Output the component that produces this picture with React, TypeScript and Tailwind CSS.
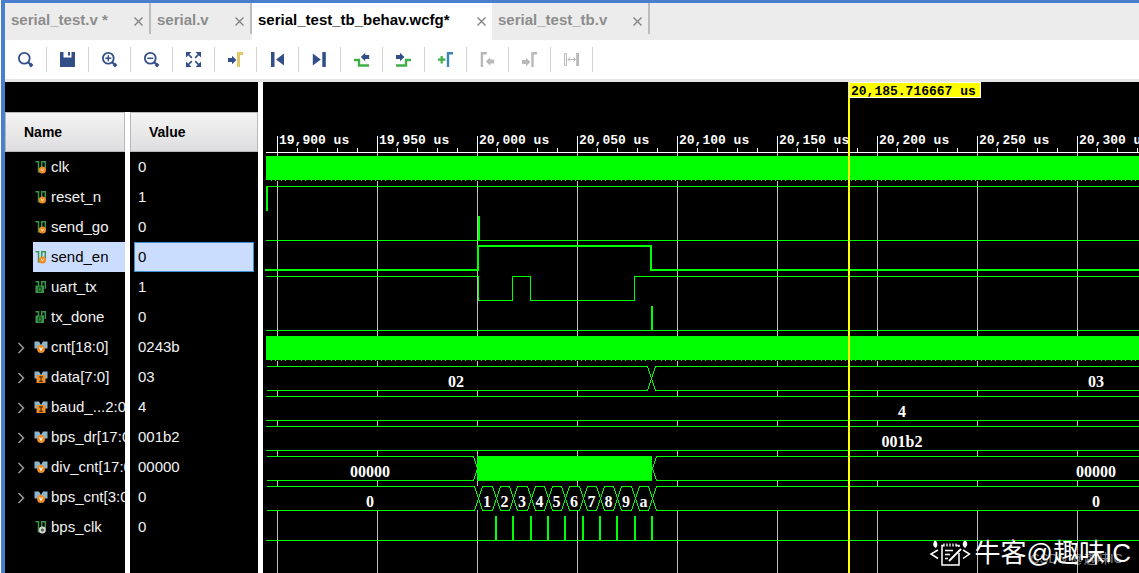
import React, { useEffect, useState } from 'react';

const NAVY = '#324f87';
const GREEN = '#3fae49';
const GRAY = '#b9b9b9';
const LIME = '#00ff00';

const tabs = [
  { label: 'serial_test.v *', width: 'w-[146px]' },
  { label: 'serial.v', width: 'w-[101px]' },
  { label: 'serial_test_tb_behav.wcfg*', width: 'w-[240px]' },
  { label: 'serial_test_tb.v', width: 'w-[158px]' },
];

const arrowRight = (y: number, fill: string) => (
  <path d={`M0 ${y - 2}h4v-2.2l4.4 4.2l-4.4 4.2v-2.2h-4z`} fill={fill} />
);
const arrowLeft = (x: number, y: number, fill: string) => (
  <path d={`M${x + 8.4} ${y - 2}h-4v-2.2l-4.4 4.2l4.4 4.2v-2.2h4z`} fill={fill} />
);
const lens = (
  <>
    <circle cx="6.3" cy="6.3" r="5.4" fill="none" stroke={NAVY} strokeWidth="1.8" />
    <path d="M10 10L12 12" stroke={NAVY} strokeWidth="2" />
    <path d="M11.8 11.8L14.2 14.2" stroke={NAVY} strokeWidth="3.4" />
  </>
);

const tools: { label: string; disabled?: boolean; icon: React.ReactNode }[] = [
  { label: 'Search', icon: lens },
  {
    label: 'Save',
    icon: <path d="M0 0h3.500v5.500h8V0H15v15H0zM8 0h2v3.600H8z" fill={NAVY} />,
  },
  {
    label: 'Zoom in',
    icon: (
      <>
        {lens}
        <path d="M3.300 6.300h6M6.300 3.300v6" stroke={NAVY} strokeWidth="1.5" />
      </>
    ),
  },
  {
    label: 'Zoom out',
    icon: (
      <>
        {lens}
        <path d="M3.300 6.300h6" stroke={NAVY} strokeWidth="1.5" />
      </>
    ),
  },
  {
    label: 'Zoom fit',
    icon: (
      <>
        <path d="M0 0h5.500L0 5.500zM15 0v5.500L9.500 0zM0 15V9.500L5.500 15zM15 15H9.500L15 9.500z" fill={NAVY} />
        <path d="M2 2l3.800 3.800M13 2L9.200 5.800M2 13l3.800-3.800M13 13L9.200 9.200" stroke={NAVY} strokeWidth="1.7" />
      </>
    ),
  },
  {
    label: 'Go to cursor',
    icon: (
      <>
        {arrowRight(8, NAVY)}
        <path d="M10.500 15V1.500H15" fill="none" stroke="#e3c766" strokeWidth="3" />
      </>
    ),
  },
  {
    label: 'Go to start',
    icon: <path d="M1 0h3.500v15H1zM14 1.500v12L6 7.500z" fill={NAVY} />,
  },
  {
    label: 'Go to end',
    icon: <path d="M10.300 0h3.500v15h-3.500zM.8 1.500v12l8-6z" fill={NAVY} />,
  },
  {
    label: 'Previous transition',
    icon: (
      <>
        <path d="M0 8h5v5.500h10" fill="none" stroke={GREEN} strokeWidth="2.4" />
        {arrowLeft(6.8, 5, NAVY)}
      </>
    ),
  },
  {
    label: 'Next transition',
    icon: (
      <>
        <path d="M0 13.500h10V8h5" fill="none" stroke={GREEN} strokeWidth="2.4" />
        {arrowRight(5, NAVY)}
      </>
    ),
  },
  {
    label: 'Add marker',
    icon: (
      <>
        <path d="M0 7.700h7.400M3.700 4v7.400" stroke={GREEN} strokeWidth="2.2" />
        <path d="M10 15V1.200h5" fill="none" stroke="#3b85b5" strokeWidth="2.4" />
      </>
    ),
  },
  {
    label: 'Previous marker',
    disabled: true,
    icon: (
      <>
        <path d="M1.900 15V1.200h5" fill="none" stroke={GRAY} strokeWidth="2.4" />
        {arrowLeft(5.8, 9.5, GRAY)}
      </>
    ),
  },
  {
    label: 'Next marker',
    disabled: true,
    icon: (
      <>
        {arrowRight(10, GRAY)}
        <path d="M10.500 15V1.200h4.500" fill="none" stroke={GRAY} strokeWidth="2.4" />
      </>
    ),
  },
  {
    label: 'Swap cursors',
    disabled: true,
    icon: (
      <>
        <path d="M.5 1.500h2v12h-2zM4 7.500h7.500M6 5.500l-2 2l2 2M9.500 5.500l2 2l-2 2" fill="none" stroke={GRAY} />
        <path d="M12.200 1H15v13h-2.800z" fill={GRAY} />
      </>
    ),
  },
];

type Kind = 'reg' | 'out' | 'clk' | 'busReg' | 'busIn';

const signals: { name: string; value: string; kind: Kind }[] = [
  { name: 'clk', value: '0', kind: 'reg' },
  { name: 'reset_n', value: '1', kind: 'reg' },
  { name: 'send_go', value: '0', kind: 'reg' },
  { name: 'send_en', value: '0', kind: 'reg' },
  { name: 'uart_tx', value: '1', kind: 'out' },
  { name: 'tx_done', value: '0', kind: 'out' },
  { name: 'cnt[18:0]', value: '0243b', kind: 'busReg' },
  { name: 'data[7:0]', value: '03', kind: 'busIn' },
  { name: 'baud_...2:0]', value: '4', kind: 'busIn' },
  { name: 'bps_dr[17:0]', value: '001b2', kind: 'busReg' },
  { name: 'div_cnt[17:0]', value: '00000', kind: 'busReg' },
  { name: 'bps_cnt[3:0]', value: '0', kind: 'busReg' },
  { name: 'bps_clk', value: '0', kind: 'clk' },
];

function SignalIcon({ kind }: { kind: Kind }) {
  const bus = kind === 'busReg' || kind === 'busIn';
  return (
    <svg width="14" height="14" viewBox="0 0 14 14" className="shrink-0" aria-hidden="true">
      {bus ? (
        <path d="M.5 1.500H5L7 5L9 1.500h4.500v7H.5z" fill="#8fb5cb" />
      ) : (
        <path d="M1.500 1.700h3v10h3.200v-10h3.600v7" fill="none" stroke="#38964d" strokeWidth="1.5" />
      )}
      {kind === 'out' && (
        <>
          <path d="M1.500 5.500H10V13H1.500z" fill="#3c9448" />
          <ellipse cx="5.8" cy="9.2" rx="1.5" ry="2.3" fill="none" stroke="#134a1f" strokeWidth="1.1" />
        </>
      )}
      {kind === 'reg' && (
        <>
          <circle cx="8.4" cy="10" r="3.6" fill="#f08a24" />
          <path d="M7.200 8.800l1.200 2.400l1.200-2.400" fill="none" stroke="#ffe3c2" strokeWidth=".9" />
        </>
      )}
      {kind === 'clk' && <circle cx="8.4" cy="10" r="2.5" fill="#555" stroke="#d8d8d8" strokeWidth="1.9" />}
      {kind === 'busReg' && (
        <>
          <circle cx="7" cy="9" r="3.9" fill="#ef8e27" />
          <path d="M5.600 7.200L7 10.600l1.400-3.400" fill="none" stroke="#fff" />
        </>
      )}
      {kind === 'busIn' && (
        <>
          <path d="M2.500 5h9v8h-9z" fill="#ef8e27" />
          <path d="M5.200 6.900h3.600M7 6.900v4.600M5.200 11.400h3.600" stroke="#4a2c08" strokeWidth="1.1" />
        </>
      )}
    </svg>
  );
}

/* Waveform geometry: 2px per microsecond, first ruler mark at x = 14. */
const EXTENT = 4000;
const PANE_LEFT = 263;
const countEdges = [215, 233, 250, 268, 285, 302, 320, 337, 354, 372, 389];
const clockPulses = [232, 249, 267, 284, 301, 319, 336, 353, 371, 388];

function useMarks() {
  const [width, setWidth] = useState(window.innerWidth);
  useEffect(() => {
    const update = () => setWidth(window.innerWidth);
    window.addEventListener('resize', update);
    return () => window.removeEventListener('resize', update);
  }, []);
  const count = Math.max(1, Math.ceil((width - PANE_LEFT - 14) / 100));
  return Array.from({ length: count }, (_, i) => ({
    x: 14 + i * 100,
    label: `${(19900 + i * 50).toLocaleString('en-US')} us`,
  }));
}

function busPath(top: number, edges: number[]) {
  const bottom = top + 24;
  const mid = top + 12;
  let d = '';
  let start = 3;
  [...edges, EXTENT].forEach((end, i) => {
    const upper = i === 0 ? `M${start} ${top}` : `M${start} ${mid}L${start + 4} ${top}`;
    const lower = i === 0 ? `M${start} ${bottom}` : `M${start} ${mid}L${start + 4} ${bottom}`;
    d += `${upper}H${end - 4}L${end} ${mid}${lower}H${end - 4}L${end} ${mid}`;
    start = end;
  });
  return d;
}

const values: [string, number, number][] = [
  ['02', 193, 305],
  ['03', 833, 305],
  ['4', 639, 335],
  ['001b2', 639, 365],
  ['00000', 107, 395],
  ['00000', 833, 395],
  ['0', 107, 425],
  ['0', 833, 425],
];

function Waveform() {
  const marks = useMarks();
  return (
    <svg className="w-full flex-1" role="img" aria-label="Waveform">
      <g shapeRendering="crispEdges">
        {marks.map((m) => (
          <g key={m.x}>
            <path d={`M${m.x + 0.5} 70V3000`} stroke="#c0c0c0" />
            <path d={`M${m.x + 0.5} 54V70`} stroke="#fff" />
            <path
              d={`M${m.x + 20.5} 66v4M${m.x + 40.5} 66v4M${m.x + 60.5} 66v4M${m.x + 80.5} 66v4`}
              stroke="#fff"
            />
          </g>
        ))}
        <path d={`M3 70.5H${EXTENT}`} stroke="#fff" />
        {[284, 314, 344, 374, 404].map((y) => (
          <rect key={y} x="3" y={y} width={EXTENT} height="24" fill="#000" />
        ))}
        {[74, 254].map((y) => (
          <g key={y}>
            <rect x="3" y={y} width={EXTENT} height="24" fill={LIME} />
            <path d={`M3 ${y + 24.5}H${EXTENT}`} stroke="#000" />
            <path d={`M8 ${y + 24.5}H${EXTENT}`} stroke={LIME} strokeDasharray="1 3 1 5" />
          </g>
        ))}
        <g fill="none" stroke={LIME}>
          <path d={`M3 104.5H${EXTENT}M3 158.5H${EXTENT}M3 248.5H${EXTENT}M3 458.5H${EXTENT}`} />
          <path d={`M3 194.5H215.5V218.5H249.5V194.5H267.5V218.5H371.5V194.5H${EXTENT}`} />
          <path d={`M2 188H215V164H388V188H${EXTENT}`} strokeWidth="2" />
          <path d="M4 104V129M216 134V158M389 224V248" strokeWidth="2" />
          {clockPulses.map((x) => (
            <path key={x} d={`M${x + 1} 434v24`} strokeWidth="2" />
          ))}
          <path d={`M3 314.5H${EXTENT}M3 338.5H${EXTENT}M3 344.5H${EXTENT}M3 368.5H${EXTENT}`} />
          <g transform="translate(0.5 0.5)">
            <path d={busPath(284, [388])} />
            <path d={busPath(374, [214, 389])} />
            <path d={busPath(404, countEdges)} />
          </g>
        </g>
        <rect x="214" y="374" width="175" height="25" fill={LIME} />
      </g>
      <g fill="#fff" fontFamily='"Liberation Serif", serif' fontWeight="700" fontSize="16" textAnchor="middle">
        {values.map(([text, x, y]) => (
          <text key={`${x}-${y}`} x={x} y={y}>
            {text}
          </text>
        ))}
        {'123456789a'.split('').map((c, i) => (
          <text key={c} x={(countEdges[i] + countEdges[i + 1]) / 2} y="425">
            {c}
          </text>
        ))}
      </g>
      <g fontFamily='"Liberation Mono", monospace' fontWeight="700" fontSize="13">
        {marks.map((m) => (
          <text key={m.x} x={m.x + 2} y="62" fill="#fff">
            {m.label}
          </text>
        ))}
        <rect x="585" y="0" width="2" height="3000" fill="#ffff00" />
        <rect x="586.5" y="0.5" width="131" height="15" fill="#ffff00" stroke="#fff" />
        <text x="588" y="13" fill="#000">
          20,185.716667 us
        </text>
      </g>
    </svg>
  );
}

function Watermark() {
  return (
    <div className="pointer-events-none absolute right-2 bottom-1 flex items-center gap-1 font-['Liberation_Sans','Noto_Sans_CJK_SC',sans-serif] text-white">
      <svg width="42" height="30" viewBox="0 0 42 30" fill="none" stroke="#fff" strokeWidth="1.5" aria-hidden="true">
        <path d="M9 12L2 16L9 20.500M34 12L40.500 16L34 20.500" />
        <path d="M15 7.500H13V27H30V15M27 7.500H30V9" />
        <path d="M15 5.500v3M18 5.500v3M21 5.500v3M24 5.500v3M27 5.500v3" strokeWidth="1.3" />
        <path d="M16 12.500h8M16 16.500h5M16 20.500h3" strokeWidth="1.3" />
        <path d="M20 23L32 11" strokeWidth="2" />
        <path d="M6 2c3 3 3 5 1 8c-4-2-3-5-1-8zM36 2c3 3 3 5 0 8c-3-2-3-5 0-8z" fill="#fff" stroke="none" />
      </svg>
      <span className="text-[26px] leading-8 whitespace-nowrap">牛客@趣味IC</span>
      <span className="absolute right-2 bottom-0 text-[13px] leading-5 whitespace-nowrap text-white/50">
        CSDN @趣味IC
      </span>
    </div>
  );
}

export default function App() {
  const [active, setActive] = useState(2);
  const [selected, setSelected] = useState('send_en');

  return (
    <div className="min-h-screen bg-white pl-px font-['Liberation_Sans',Arial,sans-serif]">
      <div className="flex min-h-screen flex-col border-t-[3px] border-l-4 border-[#4a7fd0]">
        <div role="tablist" className="flex h-[37px] items-start overflow-hidden bg-[#ececec]">
          {tabs.map((tab, i) => {
            const on = i === active;
            return (
              <div
                key={tab.label}
                className={`flex shrink-0 items-center justify-between px-1.5 ${tab.width} ${
                  on ? 'h-[37px] bg-white pb-1.5' : 'h-[31px] border-r-2 border-[#bdbdbd]'
                }`}
              >
                <button
                  role="tab"
                  aria-selected={on}
                  onClick={() => setActive(i)}
                  className={`pt-0.5 text-[15px] leading-5 font-bold whitespace-nowrap ${on ? 'text-black' : 'text-[#8c8c8c]'}`}
                >
                  {tab.label}
                </button>
                <button aria-label={`Close ${tab.label}`} className="pt-1.5">
                  <svg width="9" height="9" viewBox="0 0 9 9" stroke="#808080" strokeWidth="1.3" aria-hidden="true">
                    <path d="M.5 .5l8 8M8.500 .5l-8 8" />
                  </svg>
                </button>
              </div>
            );
          })}
        </div>

        <div role="toolbar" className="flex h-[42px] items-start overflow-hidden border-b-[3px] border-[#e6e6e6] pt-[7px]">
          {tools.map((tool) => (
            <button
              key={tool.label}
              aria-label={tool.label}
              disabled={tool.disabled}
              className="flex h-[25px] w-[42px] shrink-0 items-end border-r border-[#d2d2d2] pb-1 pl-[13px]"
            >
              <svg width="16" height="16" viewBox="0 0 16 16" aria-hidden="true">
                {tool.icon}
              </svg>
            </button>
          ))}
        </div>

        <div className="flex flex-1">
          <div className="flex w-[253px] shrink-0 flex-col bg-black">
            <table className="mt-[30px] w-full table-fixed border-separate border-spacing-0 text-left text-[15px]">
              <colgroup>
                <col className="w-[120px]" />
                <col className="w-[5px]" />
                <col />
              </colgroup>
              <thead>
                <tr className="h-10 text-[14px] text-black">
                  <th className="border border-[#b8b8b8] bg-linear-to-b from-[#f4f4f4] to-[#dedee0] p-0 pl-[18px]">Name</th>
                  <td className="bg-white p-0" />
                  <th className="border border-[#b8b8b8] bg-linear-to-b from-[#f4f4f4] to-[#dedee0] p-0 pl-[18px]">Value</th>
                </tr>
              </thead>
              <tbody>
                {signals.map((s) => {
                  const on = s.name === selected;
                  const bus = s.kind === 'busReg' || s.kind === 'busIn';
                  return (
                    <tr key={s.name} onClick={() => setSelected(s.name)} className="text-[#f2f2f2]">
                      <td className="p-0">
                        <div className="flex h-[30px] overflow-hidden">
                          <span className="flex w-7 shrink-0 items-center pt-px pl-[12px]">
                            {bus && (
                              <button aria-label={`Expand ${s.name}`}>
                                <svg width="8" height="12" viewBox="0 0 8 12" fill="none" stroke="#9a9a9a" strokeWidth="1.5" aria-hidden="true">
                                  <path d="M1.500 1l5 5l-5 5" />
                                </svg>
                              </button>
                            )}
                          </span>
                          <span className={`flex flex-1 items-center gap-[3px] pl-px whitespace-nowrap ${on ? 'bg-[#cbddff] text-black' : ''}`}>
                            <SignalIcon kind={s.kind} />
                            {s.name}
                          </span>
                        </div>
                      </td>
                      <td className="bg-white p-0" />
                      <td className="p-0 px-1">
                        <div
                          className={`flex h-[30px] items-center border pl-[3px] ${
                            on ? 'border-[#3d8fd6] bg-[#cbddff] text-black' : 'border-transparent'
                          }`}
                        >
                          {s.value}
                        </div>
                      </td>
                    </tr>
                  );
                })}
              </tbody>
            </table>
            <div className="flex flex-1 pl-[120px]">
              <div className="w-[5px] bg-white" />
            </div>
          </div>
          <div className="relative ml-[5px] flex min-w-0 flex-1 overflow-hidden bg-black">
            <Waveform />
            <Watermark />
          </div>
        </div>
      </div>
    </div>
  );
}
